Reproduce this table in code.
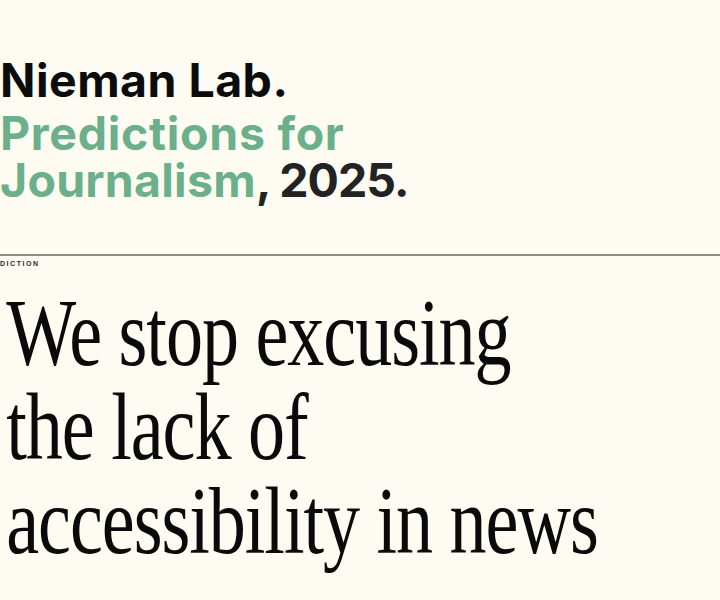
export default function App() {
  return (
    <div className="min-h-[600px] w-[720px] overflow-hidden bg-[#fefcf2]">
      <header className="pt-[57px] font-['Inter',sans-serif] text-[46.5px] font-bold leading-[47px]">
        <div className="tracking-[0.01em] text-[#0c0c0c]">Nieman Lab.</div>
        <div className="mt-[6px]">
          <span className="tracking-[0.015em] text-[#6cb08b]">Predictions for</span>
          <br />
          <span className="tracking-[0.005em] text-[#6cb08b]">Journalism</span>
          <span className="tracking-[-0.02em] text-[#232323]">, 2025.</span>
        </div>
      </header>
      <div className="mt-[50px] h-[2px] w-full bg-[#8e8c7e]" />
      <div className="mt-[3px] font-['Liberation_Sans',sans-serif] text-[7px] font-bold leading-[9px] tracking-[0.22em] text-[#2a2a2a]">
        DICTION
      </div>
      <h1 className="mt-[18px] origin-left scale-x-[0.78] whitespace-nowrap pl-[8px] font-['Liberation_Serif',serif] text-[95px] font-normal leading-[94px] tracking-[-0.014em] text-[#0a0a0a]">
        We stop excusing
        <br />
        the lack of
        <br />
        accessibility in news
      </h1>
    </div>
  );
}
